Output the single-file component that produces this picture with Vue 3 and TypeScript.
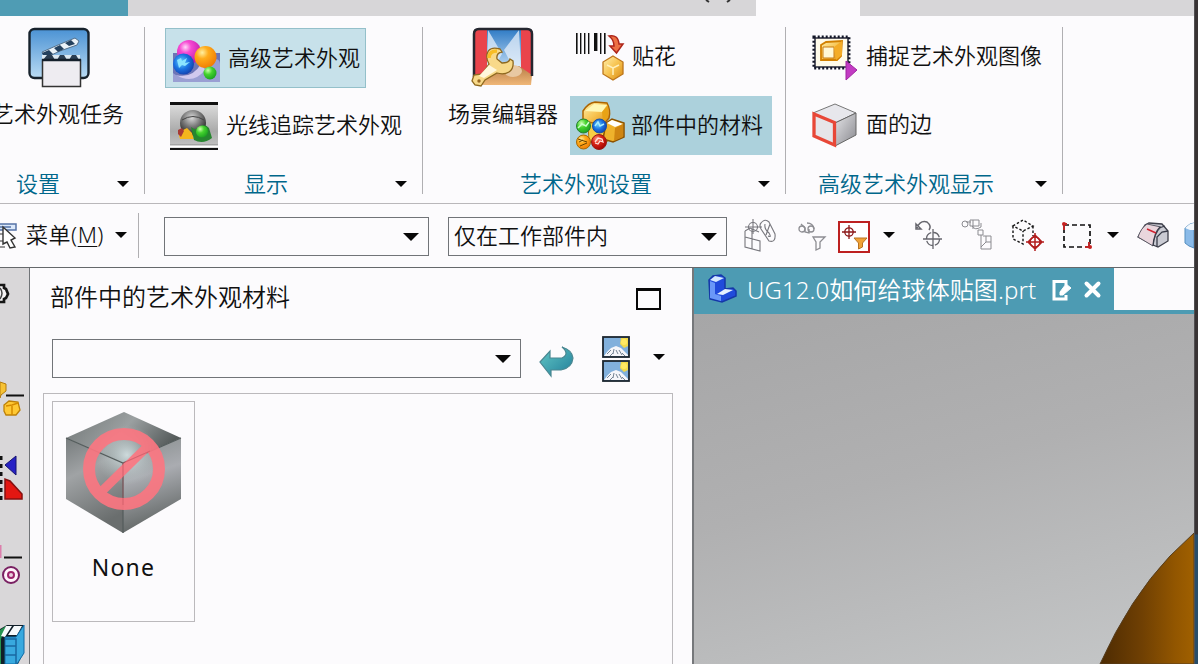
<script setup lang="ts">
const documentName: string = 'UG12.0如何给球体贴图.prt'
const barcode: { x: number; w: number }[] = [
  { x: 1, w: 1.6 }, { x: 5, w: 1.4 }, { x: 9, w: 1.4 }, { x: 13, w: 1.4 },
  { x: 19, w: 3.4 }, { x: 25, w: 1.4 }, { x: 29, w: 1.6 },
]
</script>

<template>
  <div class="window">
    <div class="main">
      <div class="tabstrip">
        <div class="file-tab"></div>
        <div class="strip-rest">
          <svg width="32" height="4" viewBox="0 0 32 4"><path d="M1 0 4 2M25 0 22 2" stroke="#333" stroke-width="2" /></svg>
        </div>
        <div class="active-tab"></div>
      </div>

      <div class="ribbon">
        <section class="group g1">
          <div class="body">
            <button class="big">
              <svg width="64" height="62" viewBox="0 0 64 62">
                <defs>
                  <linearGradient id="sky" x1="0" y1="0" x2="0" y2="1">
                    <stop offset="0" stop-color="#4b92d4" /><stop offset="1" stop-color="#b9dbf3" />
                  </linearGradient>
                </defs>
                <rect x="2.500" y="2" width="59" height="49" rx="5" fill="url(#sky)" stroke="#17222c" stroke-width="2.4" />
                <path d="M15 25 31 18 48 11 52 14 50 18 33 24 18 31z" fill="#eaf2f8" stroke="#53718d" stroke-width="1" />
                <path d="M15 26l7-3 4 4-8 4zM27 21l6-3 4 4-6 3zM38 16l6-3 4 4-6 2z" fill="#24415e" />
                <path d="M15 28H53V33H15z" fill="#dce9f2" />
                <path d="M16 33l4-5h5l3 5zM30 33l3-5h4l3 5zM42 33l3-5h4l3 5z" fill="#2b3e52" />
                <rect x="15.500" y="33" width="38" height="26.500" fill="#eeecf1" stroke="#333" stroke-width="1.500" />
                <path d="M15 33H54" stroke="#15202c" stroke-width="2.400" />
              </svg>
              <span>艺术外观任务</span>
            </button>
          </div>
          <footer><span>设置</span><b class="tri"></b></footer>
        </section>
        <div class="sep"></div>

        <section class="group g2">
          <div class="body stack">
            <button class="small hot">
              <svg width="48" height="44" viewBox="0 0 48 44">
                <defs>
                  <radialGradient id="pink" cx=".35" cy=".3" r=".8"><stop offset="0" stop-color="#ffd9fa" /><stop offset=".3" stop-color="#f649d2" /><stop offset="1" stop-color="#b513a4" /></radialGradient>
                  <radialGradient id="orange" cx=".35" cy=".3" r=".8"><stop offset="0" stop-color="#fff0a0" /><stop offset=".35" stop-color="#ffac1b" /><stop offset="1" stop-color="#ee7500" /></radialGradient>
                  <radialGradient id="blue" cx=".4" cy=".4" r=".7"><stop offset="0" stop-color="#69d4ff" /><stop offset=".5" stop-color="#1a72e1" /><stop offset="1" stop-color="#1237a4" /></radialGradient>
                  <radialGradient id="green" cx=".35" cy=".3" r=".8"><stop offset="0" stop-color="#ccffac" /><stop offset=".4" stop-color="#45d32e" /><stop offset="1" stop-color="#159a20" /></radialGradient>
                  <radialGradient id="red" cx=".35" cy=".3" r=".8"><stop offset="0" stop-color="#ff9a83" /><stop offset=".4" stop-color="#dc2517" /><stop offset="1" stop-color="#900" /></radialGradient>
                </defs>
                <rect x="0" y="14" width="47" height="29" fill="#6c75b6" />
                <path d="M0 34Q12 44 29 29T47 25V43H0z" fill="#9a9fd3" />
                <path d="M3 36Q20 46 32 31L28 25Q19 40 3 36z" fill="#d0c9ee" />
                <circle cx="16" cy="13" r="12" fill="url(#pink)" />
                <circle cx="10.500" cy="25" r="10.500" fill="url(#blue)" />
                <path d="M4 21l4-2 1 3 5-3-2 5 5-1-5 4-3-1-3 3-1-4z" fill="#8be4ff" />
                <circle cx="32.500" cy="18" r="11" fill="url(#orange)" />
                <circle cx="37" cy="34" r="6.500" fill="url(#green)" />
              </svg>
              <span>高级艺术外观</span>
            </button>
            <button class="small ray">
              <svg width="48" height="49" viewBox="0 0 48 49">
                <defs>
                  <linearGradient id="plate" x1="0" y1="0" x2="0" y2="1"><stop offset="0" stop-color="#ddd" /><stop offset=".6" stop-color="#aaa" /><stop offset="1" stop-color="#c7c7c7" /></linearGradient>
                  <radialGradient id="glass" cx=".45" cy=".3" r=".7"><stop offset="0" stop-color="#dadada" /><stop offset=".5" stop-color="#777" /><stop offset="1" stop-color="#202020" /></radialGradient>
                </defs>
                <rect x="0" y="1" width="48" height="47" fill="url(#plate)" />
                <path d="M0 1.500H48" stroke="#111" stroke-width="3" />
                <path d="M0 43H48" stroke="#888" stroke-width="1" />
                <path d="M0 44.500H48" stroke="#fff" stroke-width="2" />
                <path d="M0 47H48" stroke="#111" stroke-width="2" />
                <circle cx="23" cy="21" r="13" fill="url(#glass)" />
                <path d="M12 18Q23 11 34 18" stroke="#444" fill="none" />
                <path d="M9 34l2-5 6-3 5 5 2 6H10z" fill="#f4b51c" />
                <path d="M8 28l4-2 2 3-3 6-3-3z" fill="#a63a35" />
                <path d="M21 25q5 4 8 0 6-4 10 1l3 10q-9 7-18 2z" fill="#27862f" />
                <circle cx="32" cy="29.500" r="6" fill="url(#green)" />
              </svg>
              <span>光线追踪艺术外观</span>
            </button>
          </div>
          <footer><span>显示</span><b class="tri"></b></footer>
        </section>
        <div class="sep"></div>

        <section class="group g3">
          <div class="body row">
            <button class="big">
              <svg width="64" height="62" viewBox="0 0 64 62">
                <defs>
                  <linearGradient id="stage" x1="0" y1="0" x2="0" y2="1"><stop offset="0" stop-color="#327dc6" /><stop offset="1" stop-color="#c3ddf5" /></linearGradient>
                  <linearGradient id="floor" x1="0" y1="0" x2="0" y2="1"><stop offset="0" stop-color="#b77d47" /><stop offset="1" stop-color="#f0b778" /></linearGradient>
                </defs>
                <rect x="2" y="2" width="60" height="49" rx="5" fill="#e9444c" />
                <path d="M16 3H50V42H16z" fill="url(#stage)" />
                <path d="M17 3 31 27 22 42H16zM48 3 33 23 43 42H50z" fill="#e5effa" opacity=".75" />
                <path d="M16 43 48 39 61 48 60 58H8z" fill="url(#floor)" />
                <ellipse cx="42" cy="44" rx="9" ry="6" fill="#e8c8a3" />
                <path d="M3 50V7Q3 2 8 2H56Q61 2 61 7V49" fill="none" stroke="#252730" stroke-width="2.500" />
                <path d="M16 27Q18 19 29 22L31 25Q25 26 26 32L31 36Q38 36 39 32L42 34Q43 42 38 45Q33 48 26 46L14 53 10 59 4 58 1 54 3 48 11 47 18 37Q15 32 16 27z" fill="#f8d989" stroke="#8e681f" stroke-width="1.300" />
                <path d="M18 38 26 43 13 51 8 49z" fill="#fff7dc" />
                <path d="M18 31Q18 24 26 24" fill="none" stroke="#f8bd25" stroke-width="3.500" />
                <circle cx="8" cy="54" r="1.700" fill="#986822" />
              </svg>
              <span>场景编辑器</span>
            </button>
            <div class="stack">
              <button class="small decal">
                <svg width="51" height="50" viewBox="0 0 51 50">
                  <defs><linearGradient id="gold" x1="0" y1="0" x2="1" y2="1"><stop offset="0" stop-color="#fff0ae" /><stop offset=".5" stop-color="#f7c451" /><stop offset="1" stop-color="#d98910" /></linearGradient></defs>
                  <rect v-for="b in barcode" :key="b.x" :x="b.x" y="1" :width="b.w" :height="b.w > 3 ? 18 : 21" fill="#111" />
                  <path d="M34 4Q43 2 44 12H48L41.500 21 35 14H39Q39 8 34 4z" fill="#ed7144" stroke="#ad251a" stroke-width="1.500" />
                  <path d="M38 24 48 30V42L38 48 28 42V30z" fill="url(#gold)" stroke="#bd761b" stroke-width="1.300" />
                  <path d="M32 33 38 36 44 33M38 36V43" fill="none" stroke="#fff0bb" stroke-width="1.500" />
                </svg>
                <span>贴花</span>
              </button>
              <button class="small selected">
                <svg width="49" height="51" viewBox="0 0 49 51">
                  <path d="M7 11Q12 3 19 2L31 3Q35 10 33 18L27 25 7 21z" fill="url(#gold)" stroke="#ad6500" stroke-width="1.500" />
                  <path d="M9 11 18 4 31 5 26 12z" fill="#fff8b5" />
                  <path d="M26 12 32 5V17L27 23z" fill="#e8a315" />
                  <path d="M12 23H28L34 34 31 42H13z" fill="#f7ce45" stroke="#ac7813" />
                  <path d="M30 23 36 19 48 23V37L37 42 27 39z" fill="#eeb22c" stroke="#8c5200" stroke-width="1.500" />
                  <path d="M31 23 36 20 47 24 39 27z" fill="#fff" />
                  <path d="M39 28 47 24V37L38 41z" fill="#cf8511" />
                  <circle cx="7.500" cy="26" r="7" fill="url(#green)" stroke="#277e31" />
                  <path d="M2 28l4-4 4 2 3-4" fill="none" stroke="#c8ffc6" stroke-width="1.500" />
                  <circle cx="23.500" cy="26" r="7" fill="url(#blue)" stroke="#174fa2" />
                  <path d="M19 26l3-4 2 4 4-2" fill="none" stroke="#a6ecff" stroke-width="1.500" />
                  <circle cx="7.500" cy="42" r="7" fill="url(#orange)" stroke="#a76a04" />
                  <path d="M2 39l9 3M4 46l7-3M3 42l4-2" stroke="#694400" />
                  <circle cx="23" cy="42" r="7.500" fill="url(#red)" stroke="#991e16" />
                  <path d="M19 42l3-4 4 1 1 3-3-1-2 3-3-1" fill="none" stroke="#ffdfd8" stroke-width="1.300" />
                </svg>
                <span>部件中的材料</span>
              </button>
            </div>
          </div>
          <footer><span>艺术外观设置</span><b class="tri"></b></footer>
        </section>
        <div class="sep"></div>

        <section class="group g4">
          <div class="body stack">
            <button class="small">
              <svg width="46" height="46" viewBox="0 0 46 46">
                <rect x="3" y="3" width="33" height="29" fill="#fffbea" stroke="#242637" stroke-width="1.500" />
                <rect x="1.700" y="1.700" width="35.500" height="31.500" fill="none" stroke="#111526" stroke-width="2.500" stroke-dasharray="2 2" />
                <path d="M9 10 14 7 30 6 29 21 25 25 9 25z" fill="url(#gold)" stroke="#d28000" stroke-width="1.800" />
                <path d="M11 12H22V23H11z" fill="#fff8d7" stroke="#c97c12" />
                <path d="M22 12 30 6V20L24 25z" fill="#f4ac27" />
                <path d="M34 26 45 35 34 45z" fill="#c23bc3" stroke="#a125a2" />
              </svg>
              <span>捕捉艺术外观图像</span>
            </button>
            <button class="small faces">
              <svg width="46" height="46" viewBox="0 0 46 46">
                <defs><linearGradient id="side" x1="0" y1="0" x2="1" y2="1"><stop offset="0" stop-color="#e6e6e9" /><stop offset="1" stop-color="#88888e" /></linearGradient></defs>
                <path d="M1 10 23 1 44 10 23 20z" fill="#e7e7ec" stroke="#777" />
                <path d="M23 20 44 10V32L23 43z" fill="url(#side)" stroke="#666" />
                <path d="M2 11 22.500 19.500V42L2 33z" fill="#e6e5e9" stroke="#e84737" stroke-width="3.300" />
              </svg>
              <span>面的边</span>
            </button>
          </div>
          <footer><span>高级艺术外观显示</span><b class="tri"></b></footer>
        </section>
        <div class="sep"></div>
      </div>

      <div class="toolbar">
        <svg class="menu-icon" width="18" height="28" viewBox="0 0 18 28">
          <path d="M0 2H16V8H0M0 5H11" fill="#dbe8fa" stroke="#5573a6" stroke-width="1.500" />
          <path d="M0 12H5M0 19H4M0 25H5" stroke="#777" stroke-width="1.500" />
          <path d="M3 5 15 16 11 18 15 25 10 26 7 20 3 22z" fill="#fff" stroke="#333" stroke-width="1.400" />
        </svg>
        <span class="menu-text">菜单(<u>M</u>)</span><b class="tri"></b>
        <div class="tool-sep"></div>
        <div class="combo c1"><span></span><b class="tri large"></b></div>
        <div class="combo c2"><span>仅在工作部件内</span><b class="tri large"></b></div>
        <svg class="t1" width="32" height="34" viewBox="0 0 32 34" fill="none" stroke="#77777d" stroke-width="1.100">
          <path d="M1 12 6 9 15 13M1 12V28L16 32V22L1 18M8 10V30" /><circle cx="9" cy="8" r="4.500" /><path d="M9 0V15M1 8H18" />
          <path d="M17 4Q21-1 25 3L31 15Q32 24 25 22L17 10Q15 6 17 4zM21 5Q20 10 25 14Q28 19 24 17M26 5 22 16" />
        </svg>
        <svg class="t2" width="28" height="30" viewBox="0 0 28 30" fill="none" stroke="#8d8d92" stroke-width="1.300">
          <circle cx="4" cy="8" r="3" /><path d="M3 3 7 7V11L11 12V8" /><circle cx="13" cy="8" r="3" /><path d="M9 2Q15 2 16 8M15 16H27L22 21V27L18 29V21z" />
        </svg>
        <svg class="t3" width="32" height="32" viewBox="0 0 32 32">
          <rect x="1" y="1" width="30" height="30" fill="#fff" stroke="#bd2020" stroke-width="2" />
          <g fill="none" stroke="#8b1717" stroke-width="1.300"><circle cx="11" cy="11" r="4.200" /><path d="M11 4V18M4 11H18" /></g>
          <path d="M16 17H29L24.500 22V26L20.500 28V22z" fill="#f0a336" stroke="#b97321" />
        </svg>
        <b class="tri"></b>
        <svg class="t4" width="29" height="31" viewBox="0 0 29 31" fill="none" stroke="#66666d" stroke-width="1.300">
          <path d="M2 4V9H7zM3 8Q6 0 13 2Q18 6 15 10" stroke-width="1.500" /><circle cx="19" cy="19" r="6.500" stroke-dasharray="8 2" /><path d="M19 9V29M9 19H28" />
        </svg>
        <svg class="t5" width="33" height="33" viewBox="0 0 33 33" fill="none" stroke="#8b8b90" stroke-width="1">
          <circle cx="4" cy="5" r="3" /><path d="M5 3H10M9 1H18V7H9zM11 7Q14 12 20 8V4M12 1V10M17 11H22V16H17zM20 16V30H30V17H22M20 28 25 23V17M25 23H30" />
        </svg>
        <svg class="t6" width="34" height="33" viewBox="0 0 34 33" fill="none">
          <path d="M2 7 12 1 22 7 12 12zM2 7V20L12 25V12M22 7V17" stroke="#151515" stroke-width="1.400" stroke-dasharray="2.500 2" />
          <g stroke="#b21d1d" stroke-width="1.500"><circle cx="24" cy="23" r="5" /><path d="M24 14V32M15 23H33M17 23 24 16 31 23 24 30z" /></g>
        </svg>
        <svg class="t7" width="32" height="29" viewBox="0 0 32 29" fill="none">
          <rect x="3" y="4" width="26" height="22" stroke="#111" stroke-width="1.700" stroke-dasharray="5 3" />
          <path d="M3 9V3H6M28 21V26H24" stroke="#bb2929" stroke-width="2" /><circle cx="3" cy="3" r="2" fill="#c62121" /><circle cx="29" cy="26" r="2" fill="#c62121" />
        </svg>
        <b class="tri"></b>
        <svg class="t8" width="33" height="27" viewBox="0 0 33 27">
          <path d="M1 15 8 3 12 1 25 2 31 9V19L21 25 16 23z" fill="#cacbd3" stroke="#3d3e49" stroke-width="1.300" />
          <path d="M1 15Q4 6 10 2L24 5Q17 12 16 24z" fill="#e9d6dd" stroke="#5b5965" />
          <path d="M16 24Q17 11 23 5M20 25V15L25 10 31 9M22 6 28 4" fill="none" stroke="#383b48" stroke-width="1.300" /><path d="M10 7 19 11" stroke="#d02332" stroke-width="1.600" />
        </svg>
        <svg class="t9" width="10" height="26" viewBox="0 0 10 26">
          <path d="M1 5 6 1 10 0V25L5 23 1 20z" fill="#8abae8" stroke="#558ebf" /><path d="M1 5 6 1 10 0V7L6 7z" fill="#f2f7fc" />
        </svg>
      </div>

      <div class="workspace">
        <aside>
          <svg width="28" height="396" viewBox="0 0 28 396">
            <path d="M-2 17H4V20L6 21 8 26 6 30 4 31V34H-2" fill="#f7f5f6" stroke="#161616" stroke-width="2.700" />
            <path d="M0 20Q4 25 0 31" fill="none" stroke="#444" stroke-width="1.500" />
            <path d="M0 114 6 116V123L1 127 0 130z" fill="#f6c235" stroke="#b47b0c" />
            <path d="M6 127.500H24M4 289.500H22" stroke="#111" stroke-width="2" />
            <path d="M4 137 9 133 18 134 20 142 16 147H6L4 143z" fill="#ffc934" stroke="#bd8108" stroke-width="1.300" />
            <path d="M6 138 12 137 18 135M12 138V147" fill="none" stroke="#d58b00" stroke-width="1.500" />
            <path d="M5 197 16 188V207z" fill="#2721c5" stroke="#15136e" />
            <path d="M1 188V232" stroke="#111" stroke-width="3" stroke-dasharray="4 4" />
            <path d="M5 211V231H22V226L10 213z" fill="#e31712" stroke="#851010" stroke-width="1.500" />
            <rect x="0" y="277" width="1.500" height="13" fill="#dc7fac" />
            <circle cx="11" cy="307" r="8" fill="#fff3fa" stroke="#792062" stroke-width="2" /><circle cx="11" cy="307" r="3" fill="#ead0df" stroke="#9d246c" stroke-width="2" />
            <path d="M0 361 7 357H24V383L18 396H0z" fill="#111f29" />
            <path d="M0 362 6 358 1 371V396H0z" fill="#269350" /><path d="M6 358H12L5 369 1 368zM14 358H22L17 367H8z" fill="#f7fafc" />
            <path d="M5 369H16L24 357V385L17 396H5z" fill="#38a9df" stroke="#116ba5" />
            <path d="M5 371H16V396M5 378H16M5 387H16" fill="none" stroke="#1968a2" stroke-width="1.500" />
          </svg>
        </aside>

        <div class="panel">
          <header><h2>部件中的艺术外观材料</h2><i class="maximize"></i></header>
          <div class="search">
            <div class="combo"><span></span><b class="tri large"></b></div>
            <svg class="back" width="36" height="32" viewBox="0 0 36 32">
              <defs><linearGradient id="turn" x1="0" y1="0" x2="1" y2="1"><stop offset="0" stop-color="#64c9c6" /><stop offset="1" stop-color="#207d99" /></linearGradient></defs>
              <path d="M2 16 12 5V12H24Q32 8 24 1Q34 4 35 12Q34 22 23 24H13V30z" fill="url(#turn)" stroke="#4a8791" stroke-width="1.200" />
            </svg>
            <svg class="images" width="28" height="46" viewBox="0 0 28 46">
              <g v-for="y in [0, 24]" :key="y" :transform="`translate(0 ${y})`">
                <rect x="1" y="1" width="26" height="20" fill="#81b0dc" stroke="#1b252e" stroke-width="1.800" />
                <path d="M2 20 5 16 9 12 14 10 19 12 26 19V20z" fill="#f5f6fa" /><path d="M5 18 9 14M11 18 12 13M16 18 14 14M20 19 17 14M8 20 11 17M23 20 20 17" stroke="#748393" />
                <path d="M19 2H26V10L22 12 18 8z" fill="#f2da49" /><circle cx="22" cy="6" r="3" fill="#ffe963" />
              </g>
            </svg>
            <b class="tri"></b>
          </div>
          <div class="materials">
            <div class="card">
              <svg width="118" height="124" viewBox="0 0 118 124">
                <defs>
                  <linearGradient id="cubeTop" x1="0" y1="0" x2="1" y2=".4"><stop offset="0" stop-color="#707575" /><stop offset=".55" stop-color="#9ba0a1" /><stop offset="1" stop-color="#555b5b" /></linearGradient>
                  <linearGradient id="cubeLeft" x1="0" y1="0" x2=".3" y2="1"><stop offset="0" stop-color="#777c7d" /><stop offset=".4" stop-color="#a0a3a5" /><stop offset="1" stop-color="#6a6e6e" /></linearGradient>
                  <linearGradient id="cubeRight" x1="0" y1="0" x2=".2" y2="1"><stop offset="0" stop-color="#858b8b" /><stop offset=".45" stop-color="#aaacb1" /><stop offset="1" stop-color="#626766" /></linearGradient>
                  <radialGradient id="shine"><stop offset="0" stop-color="#dceaec" stop-opacity=".85" /><stop offset="1" stop-color="#bcc" stop-opacity="0" /></radialGradient>
                </defs>
                <path d="M1 27 59 1 116 27 58 52z" fill="url(#cubeTop)" />
                <path d="M1 27 58 52V122L1 88z" fill="url(#cubeLeft)" />
                <path d="M58 52 116 27V88L58 122z" fill="url(#cubeRight)" />
                <ellipse cx="62" cy="44" rx="32" ry="30" fill="url(#shine)" />
                <path d="M1 27 58 52 116 27M58 52V122" fill="none" stroke="#535b5b" stroke-width="1.200" />
                <g opacity=".9" fill="none" stroke="#fd7681"><circle cx="59" cy="58" r="35" stroke-width="12" /><path d="M35 82 84 34" stroke-width="9" /></g>
                <path d="M58 52 85 40M58 52V94" fill="none" stroke="#c0525d" stroke-width="1" opacity=".5" />
              </svg>
              <span>None</span>
            </div>
          </div>
        </div>

        <div class="viewer">
          <div class="doc-bar">
            <div class="doc-tab">
              <svg class="part" width="30" height="30" viewBox="0 0 30 30">
                <path d="M2 6 6 2 14 1 18 4V15L26 14 29 17V22L15 28 3 25z" fill="#214bdb" stroke="#1538a8" stroke-width="1.500" />
                <path d="M3 7 8 9V20L14 22 14 27 3 24z" fill="#6a98f8" /><path d="M3 6 8 2 17 4 9 8z" fill="#d5e9ff" /><path d="M10 20 18 15 26 16 16 21z" fill="#e6f0ff" />
              </svg>
              <span>{{ documentName }}</span>
              <svg class="edit" width="20" height="22" viewBox="0 0 20 22" fill="none" stroke="#fff">
                <path d="M14 6V2.500H2V20H14V16" stroke-width="3" /><path d="M14 5 19 9 11 16H8V13z" fill="#fff" stroke-width="1" />
              </svg>
              <svg class="close" width="18" height="18" viewBox="0 0 18 18"><path d="M2.500 2.500 14.500 14.500M14.500 2.500 2.500 14.500" stroke="#fff" stroke-width="4" stroke-linecap="round" /></svg>
            </div>
            <div class="doc-rest"></div>
          </div>
          <div class="canvas">
            <svg width="94" height="132" viewBox="0 0 94 132">
              <defs><linearGradient id="sphere" x1="0" y1="0" x2="1" y2="0"><stop offset="0" stop-color="#4d2b02" /><stop offset=".45" stop-color="#704003" /><stop offset=".8" stop-color="#925600" /><stop offset="1" stop-color="#a06000" /></linearGradient></defs>
              <path d="M0 132Q30 66 70 24L94 1V132z" fill="url(#sphere)" stroke="#553e20" stroke-width="1" />
            </svg>
          </div>
        </div>
      </div>
    </div>
    <div class="edge"></div>
  </div>
</template>

<style>
html, body { margin: 0; overflow: hidden; }
</style>

<style scoped>
* { box-sizing: border-box; }
.window { width: 1198px; height: 664px; display: flex; overflow: hidden; background: #fcfbfd; color: #101010; font: 350 22px/30px "Noto Sans", "Noto Sans CJK SC", sans-serif; }
.main { width: 1194px; flex: none; overflow: hidden; }
.edge { width: 4px; background: linear-gradient(#383334 0 534px, #284d69 535px); border-left: 1px solid #514f51; }
svg { display: block; flex: none; overflow: visible; }
span, h2 { white-space: nowrap; }
button { all: unset; box-sizing: border-box; display: flex; flex: none; }
.tabstrip { height: 16px; display: flex; background: #d7d6d8; }
.file-tab { width: 128px; background: #4f9cb4; }
.strip-rest { width: 628px; display: flex; justify-content: flex-end; padding-right: 19px; }
.active-tab { width: 104px; background: #fcfbfd; }
.ribbon { display: flex; height: 188px; padding-top: 11px; border-bottom: 1px solid #b9b7ba; }
.sep { width: 1px; height: 167px; background: #b0afb2; flex: none; }
.group { flex: none; height: 175px; }
.g1 { width: 144px; } .g2 { width: 277px; } .g3 { width: 362px; } .g4 { width: 276px; }
.body { height: 142px; }
.row { display: flex; }
.stack { display: flex; flex-direction: column; align-items: flex-start; }
.big { flex-direction: column; align-items: center; }
.big svg { margin-bottom: 9px; }
.g1 .big { width: 132px; margin-left: -8px; }
.g1 .big svg { margin-left: 2px; }
.small { align-items: center; }
.g2 .stack { padding-left: 20px; }
.hot { width: 201px; height: 60px; padding-left: 7px; border: 1px solid #94c0ca; background: #c7e1ea; margin-top: 1px; gap: 7px; }
.hot svg { margin-top: 5px; }
.hot span { margin-top: -3px; }
.ray { padding-left: 5px; margin-top: 14px; gap: 8px; }
.ray span { margin-top: -6px; }
.g3 .big { margin-left: 25px; width: 110px; }
.g3 .stack { margin-left: 12px; }
.decal { height: 60px; padding-left: 5px; gap: 6px; }
.decal span { margin-top: -4px; }
.selected { width: 202px; height: 59px; margin-top: 9px; padding-left: 6px; background: #acd1dc; gap: 6px; }
.selected span { margin-top: -4px; }
.g4 .stack { padding: 8px 0 0 26px; }
.g4 .small { gap: 8px; }
.g4 .small span { margin-top: -6px; }
.g4 .faces { margin-top: 22px; }
footer { height: 30px; display: flex; align-items: center; justify-content: space-between; color: #00678b; padding-right: 15px; }
footer span { margin-top: -2px; }
.g1 footer { padding-left: 16px; } .g2 footer { padding-left: 99px; } .g3 footer { padding-left: 97px; } .g4 footer { padding-left: 32px; }
.tri { width: 0; height: 0; flex: none; border: 6px solid transparent; border-top: 6px solid #080808; border-bottom: 0; }
.tri.large { border-left-width: 8px; border-right-width: 8px; border-top-width: 8px; }
.toolbar { display: flex; align-items: center; height: 64px; border-bottom: 1px solid #65686b; }
.toolbar > .tri { margin-top: -1px; }
.menu-text { margin: -4px 8px 0 8px; width: 81px; letter-spacing: .5px; } .menu-text u { text-underline-offset: 3px; text-decoration-thickness: 1px; }
.tool-sep { width: 1px; height: 45px; margin-left: 11px; background: #b0afb2; }
.combo { flex: none; display: flex; align-items: center; justify-content: space-between; border: 1px solid #717478; height: 39px; padding: 0 9px 0 5px; background: #fcfbfd; }
.combo span { margin-top: -3px; }
.toolbar .combo { margin-top: 2px; }
.c1 { width: 265px; margin-left: 25px; } .c2 { width: 279px; margin-left: 19px; }
.t1 { margin-left: 17px; } .t2 { margin-left: 22px; } .t3 { margin: 2px 13px 0 12px; } .t4 { margin-left: 19px; }
.t5 { margin-left: 18px; } .t6 { margin-left: 17px; } .t7 { margin: 0 14px 0 16px; } .t8 { margin-left: 18px; } .t9 { margin-left: 14px; }
.workspace { display: flex; height: 396px; }
aside { width: 30px; flex: none; background: #d9d7d9; border-right: 1px solid #717478; overflow: hidden; }
.panel { width: 664px; flex: none; border-right: 2px solid #76787b; overflow: hidden; }
header { height: 71px; display: flex; justify-content: space-between; padding: 14px 31px 0 20px; }
h2 { margin: 0; font-size: 24px; line-height: 30px; font-weight: 350; }
.maximize { width: 25px; height: 22px; margin-top: 6px; border: 2px solid #080808; border-top-width: 3px; }
.search { display: flex; height: 54px; padding-left: 22px; align-items: flex-start; }
.search .combo { width: 469px; }
.back { margin: 7px 0 0 17px; } .images { margin: -3px 23px 0 28px; } .search > .tri { margin-top: 15px; }
.materials { width: 630px; height: 280px; margin-left: 13px; border: 1px solid #bbb9bc; padding: 7px 0 0 8px; }
.card { width: 143px; height: 221px; border: 1px solid #bbb9bc; display: flex; flex-direction: column; align-items: center; padding-top: 9px; }
.card span { margin-top: 17px; font-size: 23px; letter-spacing: 1.200px; font-weight: 400; }
.viewer { width: 500px; display: flex; flex-direction: column; }
.doc-bar { display: flex; height: 46px; background: #4d9bb3; }
.doc-tab { width: 420px; display: flex; align-items: center; padding: 0 12px 2px 13px; color: #fff; font-size: 24px; }
.doc-tab .part { margin-right: 10px; margin-top: -2px; } .doc-tab span { width: 293px; margin-right: 12px; letter-spacing: .1px; } .edit { margin-right: 12px; }
.doc-rest { flex: 1; height: 42px; background: #fcfbfd; }
.canvas { flex: 1; display: flex; align-items: flex-end; justify-content: flex-end; background: linear-gradient(165deg, #a6a6a7, #b0b0b1 45%, #c5c7c8); }
</style>
